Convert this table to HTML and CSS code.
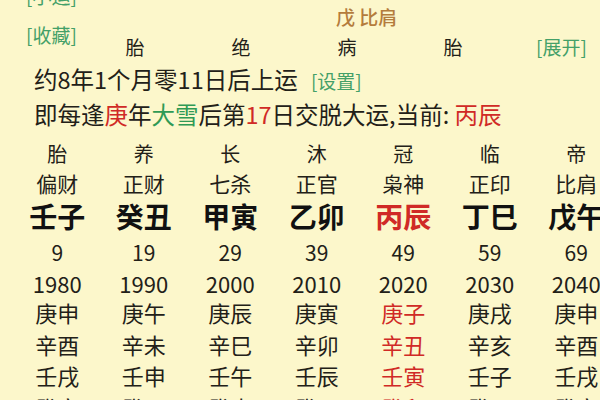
FILE: index.html
```html
<!DOCTYPE html>
<html lang="zh-CN">
<head>
<meta charset="utf-8">
<title>大运</title>
<link rel="stylesheet" href="styles.css">
</head>
<body>
<div class="page">
  <div class="top">
    <div class="side">
      <span class="link cut">[小运]</span>
      <span class="link fav">[收藏]</span>
    </div>
    <div class="main">
      <div class="hint">戊 比肩</div>
      <div class="cs">
        <span>胎</span><span>绝</span><span>病</span><span>胎</span>
        <span class="link open">[展开]</span>
      </div>
    </div>
  </div>
  <div class="line l1">约8年1个月零11日后上运 <span class="link set">[设置]</span></div>
  <div class="line l2">即每逢<span class="red">庚</span>年<span class="green">大雪</span>后第<span class="red">17</span>日交脱大运,当前: <span class="red">丙辰</span></div>

  <div class="r r1"><span>胎</span><span>养</span><span>长</span><span>沐</span><span>冠</span><span>临</span><span>帝</span></div>
  <div class="r r2"><span>偏财</span><span>正财</span><span>七杀</span><span>正官</span><span>枭神</span><span>正印</span><span>比肩</span></div>
  <div class="r r3"><span>壬子</span><span>癸丑</span><span>甲寅</span><span>乙卯</span><span class="red">丙辰</span><span>丁巳</span><span>戊午</span></div>
  <div class="r r4"><span>9</span><span>19</span><span>29</span><span>39</span><span>49</span><span>59</span><span>69</span></div>
  <div class="r r5"><span>1980</span><span>1990</span><span>2000</span><span>2010</span><span>2020</span><span>2030</span><span>2040</span></div>
  <div class="r r6"><span>庚申</span><span>庚午</span><span>庚辰</span><span>庚寅</span><span class="red">庚子</span><span>庚戌</span><span>庚申</span></div>
  <div class="r r6"><span>辛酉</span><span>辛未</span><span>辛巳</span><span>辛卯</span><span class="red">辛丑</span><span>辛亥</span><span>辛酉</span></div>
  <div class="r r6"><span>壬戌</span><span>壬申</span><span>壬午</span><span>壬辰</span><span class="red">壬寅</span><span>壬子</span><span>壬戌</span></div>
  <div class="r r6"><span>癸亥</span><span>癸酉</span><span>癸未</span><span>癸巳</span><span class="red">癸卯</span><span>癸丑</span><span>癸亥</span></div>
</div>
</body>
</html>
```

FILE: styles.css
```css
html, body {
  margin: 0;
  padding: 0;
  background: #fcf7cb;
  overflow: hidden;
}
body {
  width: 600px;
  height: 400px;
  font-family: "Noto Sans CJK SC", "Noto Sans", sans-serif;
  font-weight: 400;
  color: #222018;
}
.page {
  width: 600px;
}
.top {
  display: flex;
  height: 60px;
}
.side {
  width: 56px;
  padding-left: 26px;
  display: flex;
  flex-direction: column;
  align-items: flex-start;
}
.link {
  color: #44a068;
  font-size: 19px;
  font-weight: 400;
  line-height: 24px;
  white-space: nowrap;
}
.cut {
  margin-top: -16px;
}
.fav {
  margin-top: 15px;
}
.main {
  flex: 1;
  padding-top: 5px;
}
.hint {
  padding-left: 254px;
  font-size: 19px;
  font-weight: 500;
  line-height: 24px;
  color: #b47c3c;
}
.cs {
  margin-top: 6px;
  display: flex;
  align-items: center;
  font-size: 19px;
  line-height: 24px;
}
.cs > span {
  width: 106px;
  text-align: center;
}
.cs > .open {
  width: auto;
  margin-left: 30px;
}
.line {
  padding-left: 34px;
  font-size: 23.5px;
  line-height: 30px;
  white-space: nowrap;
}
.l1 {
  margin-top: 4px;
}
.l1 .set {
  margin-left: 8px;
}
.l2 {
  margin-top: 5px;
}
.red {
  color: #d02a26;
}
.green {
  color: #2f9a55;
}
.r {
  display: grid;
  grid-template-columns: repeat(7, 86.5px);
  padding-left: 14px;
  white-space: nowrap;
}
.r > span {
  text-align: center;
}
.r1 {
  margin-top: 10px;
  font-size: 20px;
  line-height: 30px;
}
.r2 {
  font-size: 21px;
  line-height: 28px;
}
.r3 {
  font-size: 28px;
  font-weight: 700;
  line-height: 38px;
  color: #111;
}
.r3 > .red {
  color: #d02a26;
}
.r4 {
  font-size: 21px;
  line-height: 34px;
}
.r5 {
  font-size: 22px;
  line-height: 28px;
}
.r6 {
  font-size: 22px;
  line-height: 31.5px;
}
```
